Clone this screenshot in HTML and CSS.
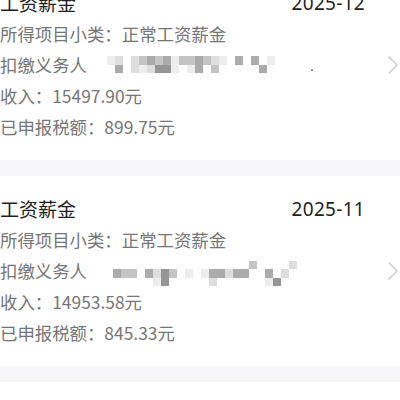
FILE: index.html
```html
<!DOCTYPE html>
<html lang="zh-CN">
<head>
<meta charset="utf-8">
<link rel="stylesheet" href="styles.css">
</head>
<body>
<div class="list">
  <div class="card">
    <div class="content">
      <div class="head"><span class="title">工资薪金</span><span class="date">2025-12</span></div>
      <div class="row">所得项目小类：正常工资薪金</div>
      <div class="row">扣缴义务人<span class="mosaic m1">
        <i class="c1"></i><i class="c2"></i><i></i><i class="c2"></i><i class="c3"></i><i class="c4"></i><i class="c3"></i><i class="c4"></i><i class="c1"></i><i class="c3"></i><i class="c3"></i><i class="c4"></i><i class="c3"></i><i class="c2"></i><i class="c1"></i><i></i><i class="c4"></i><i></i><i class="c4"></i><i></i><i class="c1"></i><i></i>
        <i></i><i class="c4"></i><i></i><i class="c2"></i><i class="c1"></i><i class="c2"></i><i class="c5"></i><i class="c5"></i><i class="c1"></i><i></i><i class="c1"></i><i class="c4"></i><i></i><i class="c3"></i><i></i><i></i><i></i><i></i><i></i><i class="c4"></i><i></i><i></i>
      </span><span class="dot"></span></div>
      <div class="row">收入：15497.90元</div>
      <div class="row">已申报税额：899.75元</div>
    </div>
    <svg class="chev" width="10" height="18" viewBox="0 0 10 18"><path d="M1 1 L9 9 L1 17" fill="none" stroke="#c9c9c9" stroke-width="1.4" stroke-linecap="round" stroke-linejoin="round"/></svg>
  </div>
  <div class="gap"></div>
  <div class="card">
    <div class="content">
      <div class="head"><span class="title">工资薪金</span><span class="date">2025-11</span></div>
      <div class="row">所得项目小类：正常工资薪金</div>
      <div class="row">扣缴义务人<span class="mosaic m2">
        <i></i><i></i><i></i><i></i><i></i><i></i><i></i><i></i><i></i><i></i><i></i><i></i><i></i><i></i><i></i><i></i><i></i><i class="c3"></i><i></i><i></i><i></i><i></i><i class="c2"></i><i></i>
        <i class="c4"></i><i class="c3"></i><i class="c3"></i><i></i><i class="c4"></i><i class="c2"></i><i class="c5"></i><i class="c3"></i><i></i><i class="c1"></i><i></i><i class="c1"></i><i class="c4"></i><i class="c4"></i><i class="c2"></i><i class="c4"></i><i class="c4"></i><i></i><i></i><i class="c4"></i><i></i><i class="c2"></i><i></i><i></i>
        <i></i><i></i><i></i><i></i><i></i><i class="c1"></i><i class="c5"></i><i></i><i></i><i></i><i></i><i></i><i class="c2"></i><i></i><i></i><i></i><i></i><i></i><i></i><i class="c1"></i><i class="c5"></i><i></i><i></i><i></i>
      </span></div>
      <div class="row">收入：14953.58元</div>
      <div class="row">已申报税额：845.33元</div>
    </div>
    <svg class="chev" width="10" height="18" viewBox="0 0 10 18"><path d="M1 1 L9 9 L1 17" fill="none" stroke="#c9c9c9" stroke-width="1.4" stroke-linecap="round" stroke-linejoin="round"/></svg>
  </div>
  <div class="gap"></div>
  <div class="card last"></div>
</div>
</body>
</html>
```

FILE: styles.css
```css
html, body {
  margin: 0;
  padding: 0;
  background: #ffffff;
  width: 400px;
  height: 400px;
  overflow: hidden;
  font-family: "Noto Sans CJK SC", "Noto Sans", sans-serif;
}

.list {
  margin-top: -30px;
  display: flex;
  flex-direction: column;
}

.card {
  display: flex;
  align-items: center;
  height: 190px;
  box-sizing: border-box;
  padding: 17px 0 18px 0;
  background: #ffffff;
}

.card.last {
  height: 18px;
  padding: 0;
}

.content {
  flex: 1;
  display: flex;
  flex-direction: column;
}

.head {
  display: flex;
  justify-content: space-between;
  align-items: center;
  height: 31px;
}

.title {
  font-size: 19px;
  color: #1f1f1f;
}

.date {
  font-size: 19px;
  color: #1f1f1f;
  font-family: "Noto Sans", "Liberation Sans", sans-serif;
  letter-spacing: 0.3px;
}

.row {
  height: 31px;
  line-height: 31px;
  font-size: 17.4px;
  color: #757575;
  display: flex;
  align-items: center;
  white-space: nowrap;
}

.mosaic {
  display: inline-grid;
  grid-auto-rows: 8.5px;
}

.m1 {
  grid-template-columns: repeat(22, 8px);
  margin-left: 20px;
}

.m2 {
  grid-template-columns: repeat(24, 8px);
  margin-left: 26px;
  margin-top: 6px;
}

.mosaic i {
  display: block;
}

.c1 { background: #ededed; }
.c2 { background: #dedede; }
.c3 { background: #c4c4c4; }
.c4 { background: #ababab; }
.c5 { background: #959595; }

.dot {
  width: 2px;
  height: 2px;
  background: #9a9a9a;
  margin-left: 28px;
  margin-top: 10px;
}

.chev {
  flex: none;
  margin-left: 23px;
  margin-right: 2px;
}

.gap {
  height: 16px;
  background: #f5f5f8;
}
```
